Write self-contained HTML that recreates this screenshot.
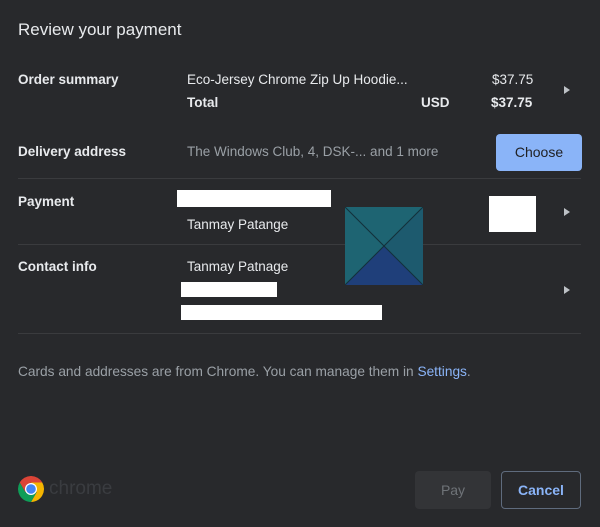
<!DOCTYPE html>
<html><head><style>
body{margin:0;width:600px;height:527px;background:#28292c;font-family:"Liberation Sans",sans-serif;color:#e8eaed;position:relative;overflow:hidden}
.a{position:absolute;white-space:nowrap;font-size:13.5px;line-height:16px}
.b{font-weight:bold}
.sep{position:absolute;left:18px;width:563px;height:1px;background:#3a3b3e}
.w{position:absolute;background:#fff}
.arr{position:absolute;width:0;height:0;border-left:6px solid #bdc1c6;border-top:4.5px solid transparent;border-bottom:4.5px solid transparent}
</style></head><body>
<div class="a" style="left:18px;top:20px;font-size:17px;line-height:20px">Review your payment</div>

<div class="a b" style="left:18px;top:72px">Order summary</div>
<div class="a" style="left:187px;top:72px">Eco-Jersey Chrome Zip Up Hoodie...</div>
<div class="a" style="left:492px;top:72px">$37.75</div>
<div class="a b" style="left:187px;top:95px">Total</div>
<div class="a b" style="left:421px;top:95px">USD</div>
<div class="a b" style="left:491px;top:95px">$37.75</div>
<div class="arr" style="left:564px;top:86px"></div>

<div class="a b" style="left:18px;top:144px">Delivery address</div>
<div class="a" style="left:187px;top:144px;color:#9aa0a6">The Windows Club, 4, DSK-... and 1 more</div>
<div style="position:absolute;left:496px;top:134px;width:86px;height:37px;background:#8ab4f8;border-radius:4px;color:#202124;font-size:14px;line-height:37px;text-align:center">Choose</div>
<div class="sep" style="top:178px"></div>

<div class="a b" style="left:18px;top:194px">Payment</div>
<div class="w" style="left:177px;top:190px;width:154px;height:17px"></div>
<div class="a" style="left:187px;top:217px">Tanmay Patange</div>
<div class="w" style="left:489px;top:196px;width:47px;height:36px"></div>
<div class="arr" style="left:564px;top:208px"></div>
<div class="sep" style="top:244px"></div>

<div class="a b" style="left:18px;top:259px">Contact info</div>
<div class="a" style="left:187px;top:259px">Tanmay Patnage</div>
<div class="w" style="left:181px;top:282px;width:96px;height:15px"></div>
<div class="w" style="left:181px;top:305px;width:201px;height:15px"></div>
<div class="arr" style="left:564px;top:286px"></div>
<div class="sep" style="top:333px"></div>

<svg style="position:absolute;left:345px;top:207px" width="78" height="78">
<rect width="78" height="78" fill="#1d5a6e"/>
<polygon points="0,0 39,39 0,78" fill="#1e6472"/>
<polygon points="0,0 78,0 39,39" fill="#1e6472"/>
<polygon points="0,78 39,39 78,78" fill="#1f3f7a"/>
<line x1="0" y1="0" x2="78" y2="78" stroke="#14303a"/>
<line x1="78" y1="0" x2="0" y2="78" stroke="#14303a"/>
</svg>

<div class="a" style="left:18px;top:364px;font-size:13.7px;color:#9aa0a6">Cards and addresses are from Chrome. You can manage them in <span style="color:#8ab4f8">Settings</span>.</div>

<svg style="position:absolute;left:18px;top:476px" width="26" height="26" viewBox="-13 -13 26 26">
<path d="M-11.26 -6.5 A13 13 0 0 1 11.26 -6.5 L0 -6.5 Z" fill="#db4437"/>
<path d="M-11.26 -6.5 L0 -6.5 L-5.6 3.2 Z" fill="#db4437"/>
<path d="M11.26 -6.5 A13 13 0 0 1 0 13 L5.6 3.2 L0 -6.5 Z" fill="#f4b400"/>
<path d="M0 13 A13 13 0 0 1 -11.26 -6.5 L-5.6 3.2 L5.6 3.2 Z" fill="#0f9d58"/>
<circle r="6" fill="#fff"/><circle r="4.8" fill="#4285f4"/>
</svg>
<div class="a" style="left:49px;top:478px;font-size:19px;line-height:22px;color:#3a3c40">chrome</div>

<div style="position:absolute;left:415px;top:471px;width:76px;height:38px;background:#333437;border-radius:4px;color:#6f7378;font-size:14px;line-height:38px;text-align:center">Pay</div>
<div style="position:absolute;left:501px;top:471px;width:78px;height:36px;border:1px solid #5f6b7d;border-radius:4px;color:#8ab4f8;font-size:14px;line-height:36px;text-align:center;font-weight:bold">Cancel</div>
</body></html>
